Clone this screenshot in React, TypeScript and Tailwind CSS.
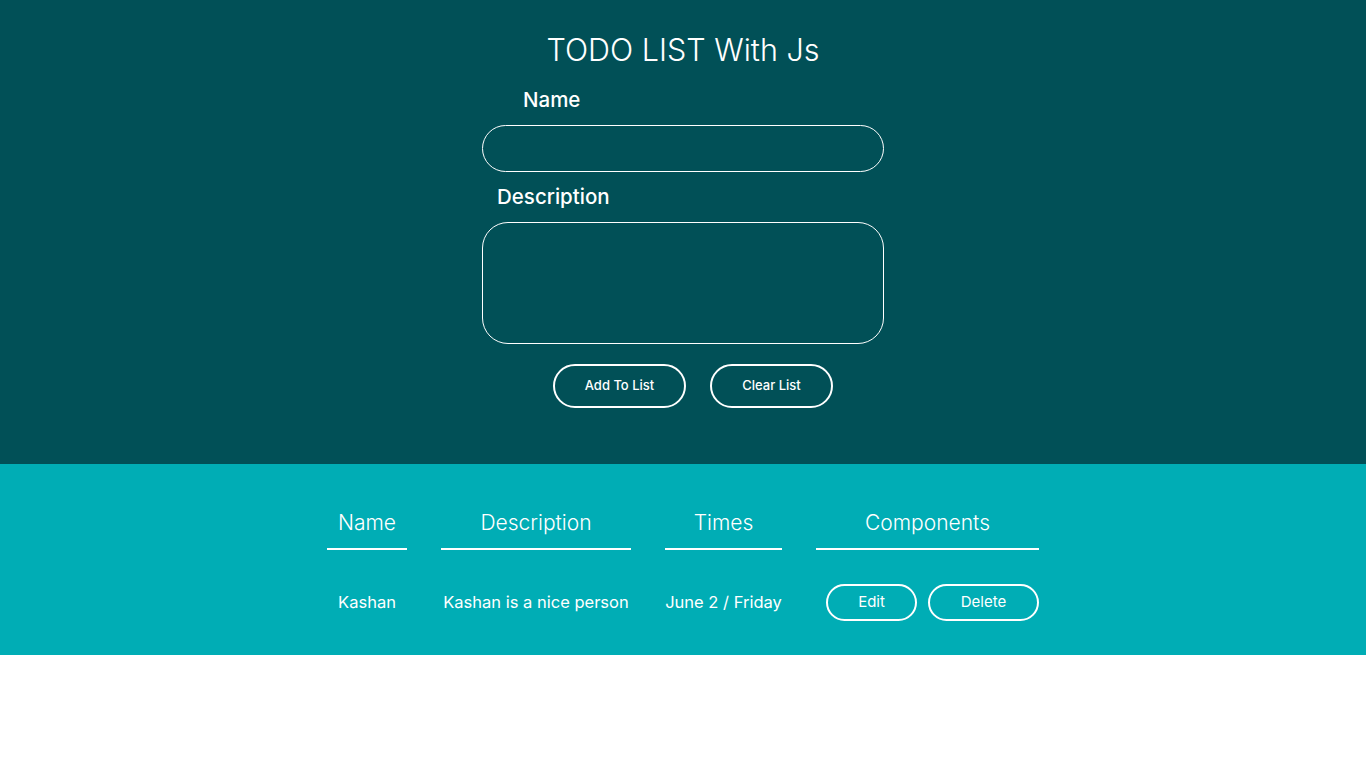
import React from "react";

export default function App() {
  const font = { fontFamily: "Inter, 'Open Sans', sans-serif" };
  return (
    <div className="min-h-[768px] bg-white" style={font}>
      <section className="bg-[#015057] h-[464px] flex flex-col items-center pt-[28px]">
        <h1 className="text-[30.5px] leading-[44px] font-light text-white">TODO LIST With Js</h1>
        <div className="w-[402px] flex flex-col mt-[14px]">
          <label className="text-[20.5px] leading-[28px] font-medium text-white pl-[41px]">Name</label>
          <input className="mt-[11px] h-[47px] w-[402px] rounded-full border border-white bg-transparent outline-none" />
          <label className="mt-[11px] text-[20.5px] leading-[28px] font-medium text-white pl-[15px]">Description</label>
          <textarea className="mt-[11px] h-[122px] w-[402px] rounded-[26px] border border-white bg-transparent outline-none resize-none" />
          <div className="flex gap-[24px] mt-[20px] pl-[71px]">
            <button className="w-[133px] h-[44px] rounded-full border-2 border-white text-white text-[13px] font-medium">Add To List</button>
            <button className="w-[123px] h-[44px] rounded-full border-2 border-white text-white text-[13px] font-medium">Clear List</button>
          </div>
        </div>
      </section>
      <section className="bg-[#00adb5] h-[191px] flex justify-center items-start pt-[44px]">
        <table className="border-separate border-spacing-x-[34px] border-spacing-y-0 -mx-[34px] text-white">
          <thead>
            <tr>
              <th className="w-[80px] font-light text-[21px] leading-[30px] pb-[10px] border-b-2 border-white">Name</th>
              <th className="w-[190px] font-light text-[21px] leading-[30px] pb-[10px] border-b-2 border-white">Description</th>
              <th className="w-[117px] font-light text-[21px] leading-[30px] pb-[10px] border-b-2 border-white">Times</th>
              <th className="w-[223px] font-light text-[21px] leading-[30px] pb-[10px] border-b-2 border-white">Components</th>
            </tr>
          </thead>
          <tbody>
            <tr>
              <td className="text-center text-[16.5px] pt-[34px] whitespace-nowrap">Kashan</td>
              <td className="text-center text-[16.5px] pt-[34px] whitespace-nowrap">Kashan is a nice person</td>
              <td className="text-center text-[16.5px] pt-[34px] whitespace-nowrap">June 2 / Friday</td>
              <td className="pt-[34px]">
                <div className="flex justify-end gap-[11px]">
                  <button className="w-[91px] h-[37px] rounded-full border-2 border-white text-[15px]">Edit</button>
                  <button className="w-[111px] h-[37px] rounded-full border-2 border-white text-[15px]">Delete</button>
                </div>
              </td>
            </tr>
          </tbody>
        </table>
      </section>
    </div>
  );
}
